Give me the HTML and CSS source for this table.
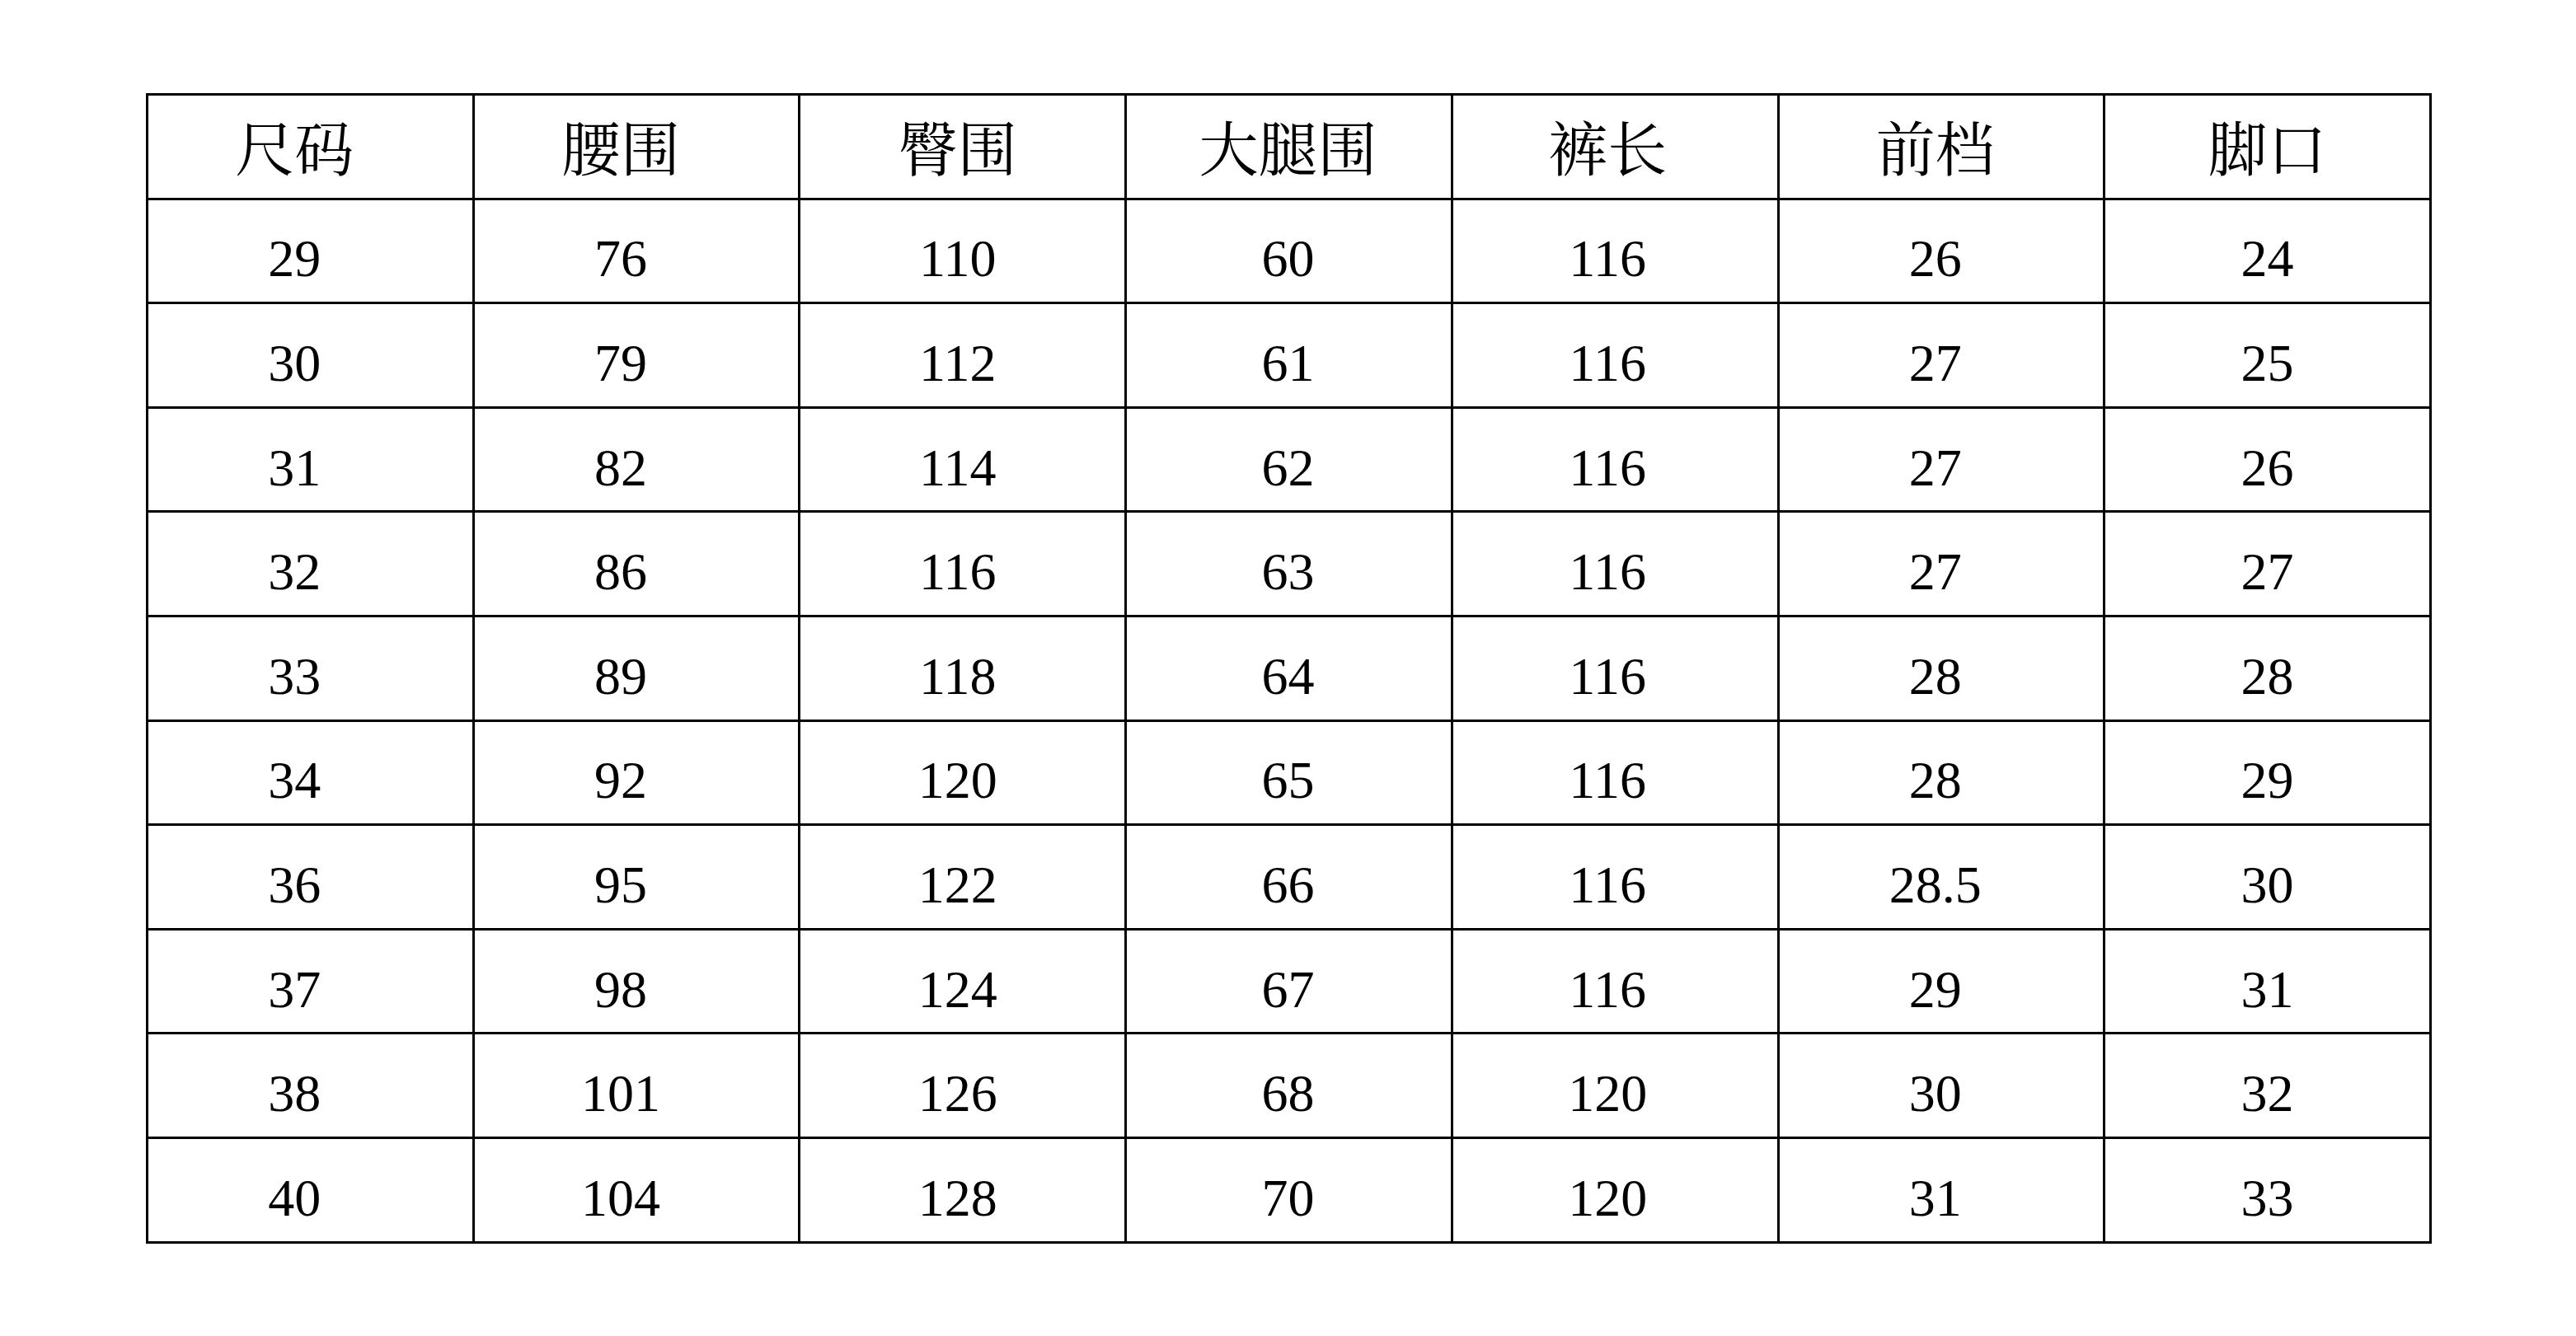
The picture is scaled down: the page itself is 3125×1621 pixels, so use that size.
FILE: index.html
```html
<!DOCTYPE html>
<html lang="zh-CN">
<head>
<meta charset="utf-8">
<title>尺码表</title>
<link rel="stylesheet" href="styles.css">
</head>
<body>
<div class="page">
<table class="size-table">
<thead>
<tr><th>尺码</th><th>腰围</th><th>臀围</th><th>大腿围</th><th>裤长</th><th>前档</th><th>脚口</th></tr>
</thead>
<tbody>
<tr><td>29</td><td>76</td><td>110</td><td>60</td><td>116</td><td>26</td><td>24</td></tr>
<tr><td>30</td><td>79</td><td>112</td><td>61</td><td>116</td><td>27</td><td>25</td></tr>
<tr><td>31</td><td>82</td><td>114</td><td>62</td><td>116</td><td>27</td><td>26</td></tr>
<tr><td>32</td><td>86</td><td>116</td><td>63</td><td>116</td><td>27</td><td>27</td></tr>
<tr><td>33</td><td>89</td><td>118</td><td>64</td><td>116</td><td>28</td><td>28</td></tr>
<tr><td>34</td><td>92</td><td>120</td><td>65</td><td>116</td><td>28</td><td>29</td></tr>
<tr><td>36</td><td>95</td><td>122</td><td>66</td><td>116</td><td>28.5</td><td>30</td></tr>
<tr><td>37</td><td>98</td><td>124</td><td>67</td><td>116</td><td>29</td><td>31</td></tr>
<tr><td>38</td><td>101</td><td>126</td><td>68</td><td>120</td><td>30</td><td>32</td></tr>
<tr><td>40</td><td>104</td><td>128</td><td>70</td><td>120</td><td>31</td><td>33</td></tr>
</tbody>
</table>
</div>
</body>
</html>
```

FILE: styles.css
```css
html, body {
  margin: 0;
  padding: 0;
  background: #ffffff;
}

.page {
  padding: 113px 0 0 177px;
}

.size-table {
  border-collapse: collapse;
  table-layout: fixed;
  width: 2773px;
  color: #000000;
  font-family: "Liberation Serif", "Noto Serif CJK SC", "AR PL UMing CN", "Noto Sans CJK SC", serif;
}

.size-table th,
.size-table td {
  border: 3px solid #000000;
  text-align: center;
  vertical-align: middle;
  padding: 0;
  height: 126.6px;
  box-sizing: border-box;
}

.size-table th {
  font-weight: normal;
  font-size: 72px;
  line-height: 1;
  padding-top: 10px;
}

.size-table td {
  font-size: 64px;
  line-height: 1;
  padding-top: 20px;
}

.size-table th:nth-child(1),
.size-table td:nth-child(1),
.size-table th:nth-child(2),
.size-table td:nth-child(2) {
  padding-right: 38px;
}

.size-table th:nth-child(3),
.size-table td:nth-child(3) {
  padding-right: 12px;
}

.size-table th:nth-child(4),
.size-table td:nth-child(4) {
  padding-right: 2px;
}

.size-table th:nth-child(5),
.size-table td:nth-child(5) {
  padding-right: 18px;
}

.size-table th:nth-child(6),
.size-table td:nth-child(6) {
  padding-right: 14px;
}
```
